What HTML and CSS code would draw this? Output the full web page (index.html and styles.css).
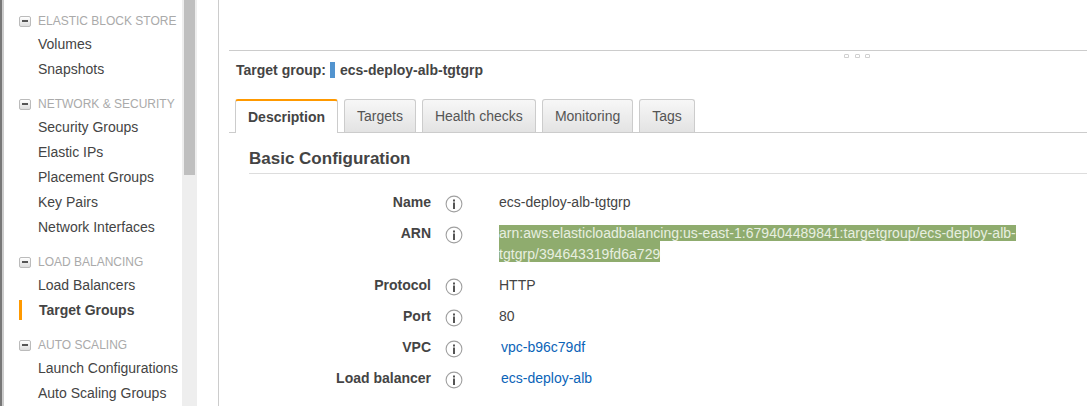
FILE: index.html
```html
<!DOCTYPE html>
<html lang="en">
<head>
  <meta charset="UTF-8" />
  <title>Target Groups | EC2 Management Console</title>
  <link rel="stylesheet" href="styles.css">
</head>
<body>
  <nav class="sidebar">
    <div class="nav-list">
      <div class="nav-group nav-group-first">
        <div class="nav-heading"><span class="toggle"></span>ELASTIC BLOCK STORE</div>
        <a class="nav-item">Volumes</a>
        <a class="nav-item">Snapshots</a>
      </div>
      <div class="nav-group">
        <div class="nav-heading"><span class="toggle"></span>NETWORK &amp; SECURITY</div>
        <a class="nav-item">Security Groups</a>
        <a class="nav-item">Elastic IPs</a>
        <a class="nav-item">Placement Groups</a>
        <a class="nav-item">Key Pairs</a>
        <a class="nav-item">Network Interfaces</a>
      </div>
      <div class="nav-group">
        <div class="nav-heading"><span class="toggle"></span>LOAD BALANCING</div>
        <a class="nav-item">Load Balancers</a>
        <a class="nav-item active">Target Groups</a>
      </div>
      <div class="nav-group">
        <div class="nav-heading"><span class="toggle"></span>AUTO SCALING</div>
        <a class="nav-item">Launch Configurations</a>
        <a class="nav-item">Auto Scaling Groups</a>
      </div>
    </div>
    <div class="scroll-track"><div class="scroll-thumb"></div></div>
  </nav>

  <main class="content">
    <div class="list-pane"></div>
    <div class="grip"><span></span><span></span><span></span></div>

    <section class="detail">
      <div class="detail-title">
        <span>Target group:</span>
        <i class="marker"></i>
        <span>ecs-deploy-alb-tgtgrp</span>
      </div>

      <div class="tabs">
        <div class="tab active">Description</div>
        <div class="tab">Targets</div>
        <div class="tab">Health checks</div>
        <div class="tab">Monitoring</div>
        <div class="tab">Tags</div>
      </div>

      <div class="config">
        <h2>Basic Configuration</h2>
        <div class="rows">
          <div class="row">
            <div class="label">Name</div>
            <svg class="info" viewBox="0 0 18 18"><use href="#info" /></svg>
            <div class="value">ecs-deploy-alb-tgtgrp</div>
          </div>
          <div class="row row-tall">
            <div class="label">ARN</div>
            <svg class="info" viewBox="0 0 18 18"><use href="#info" /></svg>
            <div class="value"><span class="selected">arn:aws:elasticloadbalancing:us-east-1:679404489841:targetgroup/ecs-deploy-alb-</span><span class="selected selected-next">tgtgrp/394643319fd6a729</span></div>
          </div>
          <div class="row">
            <div class="label">Protocol</div>
            <svg class="info" viewBox="0 0 18 18"><use href="#info" /></svg>
            <div class="value">HTTP</div>
          </div>
          <div class="row">
            <div class="label">Port</div>
            <svg class="info" viewBox="0 0 18 18"><use href="#info" /></svg>
            <div class="value">80</div>
          </div>
          <div class="row">
            <div class="label">VPC</div>
            <svg class="info" viewBox="0 0 18 18"><use href="#info" /></svg>
            <div class="value"><a class="link">vpc-b96c79df</a></div>
          </div>
          <div class="row">
            <div class="label">Load balancer</div>
            <svg class="info" viewBox="0 0 18 18"><use href="#info" /></svg>
            <div class="value"><a class="link">ecs-deploy-alb</a></div>
          </div>
        </div>
      </div>
    </section>
  </main>

  <svg class="defs" width="0" height="0">
    <symbol id="info" viewBox="0 0 18 18">
      <circle cx="9" cy="9" r="7.9" fill="#fff" stroke="#a0a0a0" stroke-width="1.1" />
      <rect x="8" y="4.5" width="2" height="2" fill="#555" />
      <rect x="8" y="7.5" width="2" height="6.5" fill="#555" />
    </symbol>
  </svg>
</body>
</html>
```

FILE: styles.css
```css
* {
  box-sizing: border-box;
}
html, body {
  height: 406px;
  overflow: hidden;
}
body {
  margin: 0;
  display: flex;
  font-family: 'Liberation Sans', Arial, sans-serif;
  font-size: 14px;
  color: #444;
  background-color: #fff;
}

/* left nav */
.sidebar {
  width: 218px;
  flex: none;
  display: flex;
  align-items: stretch;
  padding-right: 21px;
  border-left: 4px solid;
  border-image: linear-gradient(to right, #777 0, #777 2px, #ccc 2px, #ccc 4px) 4;
}
.nav-list {
  width: 178px;
  flex: none;
  padding: 8px 0 0 15px;
}
.nav-group {
  margin-bottom: 9px;
}
.nav-heading {
  display: flex;
  align-items: center;
  height: 24px;
  padding-top: 2px;
  font-size: 12px;
  color: #aaa;
  white-space: nowrap;
}
.toggle {
  position: relative;
  width: 12px;
  height: 11px;
  margin-right: 7px;
  flex: none;
  border: 1px solid #bbb;
  border-radius: 2px;
  background: linear-gradient(#fff, #ddd);
}
.toggle::after {
  content: "";
  position: absolute;
  left: 2px;
  top: 3px;
  width: 6px;
  height: 2px;
  background-color: #555;
}
.nav-item {
  display: block;
  height: 25px;
  line-height: 25px;
  padding-left: 19px;
  white-space: nowrap;
}
.nav-item.active {
  position: relative;
  padding-left: 20px;
  font-weight: bold;
}
.nav-item.active::before {
  content: "";
  position: absolute;
  left: 0;
  top: 2px;
  width: 3px;
  height: 20px;
  background-color: #f90;
}
.scroll-track {
  width: 15px;
  flex: none;
  padding: 0 2px;
  background-color: #eee;
}
.scroll-thumb {
  height: 175px;
  background-color: #bfbfbf;
}

/* right side */
.content {
  position: relative;
  flex: 1;
  min-width: 0;
  padding-left: 10px;
  border-left: 1px solid #ccc;
}
.list-pane {
  height: 51px;
  border-bottom: 1px solid #ccc;
}
.grip {
  position: absolute;
  left: 625px;
  top: 54px;
  display: flex;
  gap: 5.5px;
}
.grip span {
  width: 5px;
  height: 4px;
  border: 1px solid #d0d0d0;
  border-radius: 1px 1px 0 0;
}
.detail-title {
  display: flex;
  align-items: center;
  height: 16px;
  margin: 11px 0 21px 7px;
  font-weight: bold;
}
.marker {
  width: 5px;
  height: 16px;
  margin: 0 5px 0 4px;
  background-color: #5294cf;
}
.tabs {
  display: flex;
  gap: 6px;
  height: 34px;
  padding-left: 6px;
  border-bottom: 1px solid #ccc;
}
.tab {
  height: 33px;
  line-height: 32px;
  padding: 0 12px;
  border: 1px solid #ccc;
  border-bottom: none;
  border-radius: 3px 3px 0 0;
  background: linear-gradient(#f7f7f7, #e3e3e3);
  color: #555;
}
.tab.active {
  height: 34px;
  padding: 0 12px;
  border-top: 2px solid #f90;
  background: #fff;
  color: #444;
  font-weight: bold;
}
.config {
  padding: 15px 0 0 20px;
}
.config h2 {
  margin: 0 0 17px;
  height: 26px;
  line-height: 22px;
  font-size: 17px;
  border-bottom: 1px solid #ddd;
}
.row {
  display: flex;
  align-items: flex-start;
  height: 31px;
}
.row-tall {
  height: 52px;
}
.label {
  width: 182px;
  line-height: 22px;
  text-align: right;
  font-weight: bold;
  flex: none;
}
.info {
  width: 18px;
  height: 18px;
  margin: 4px 36px 0 14px;
  flex: none;
}
.value {
  flex: 1;
  min-width: 0;
  line-height: 21px;
  padding-top: 1px;
}
.selected {
  background-color: #8fac6e;
  color: #e8efe0;
  letter-spacing: 0.04px;
}
.selected-next {
  padding-top: 5px;
}
.link {
  margin-left: 2px;
  color: #0b64b8;
}
.defs {
  position: absolute;
}
```
